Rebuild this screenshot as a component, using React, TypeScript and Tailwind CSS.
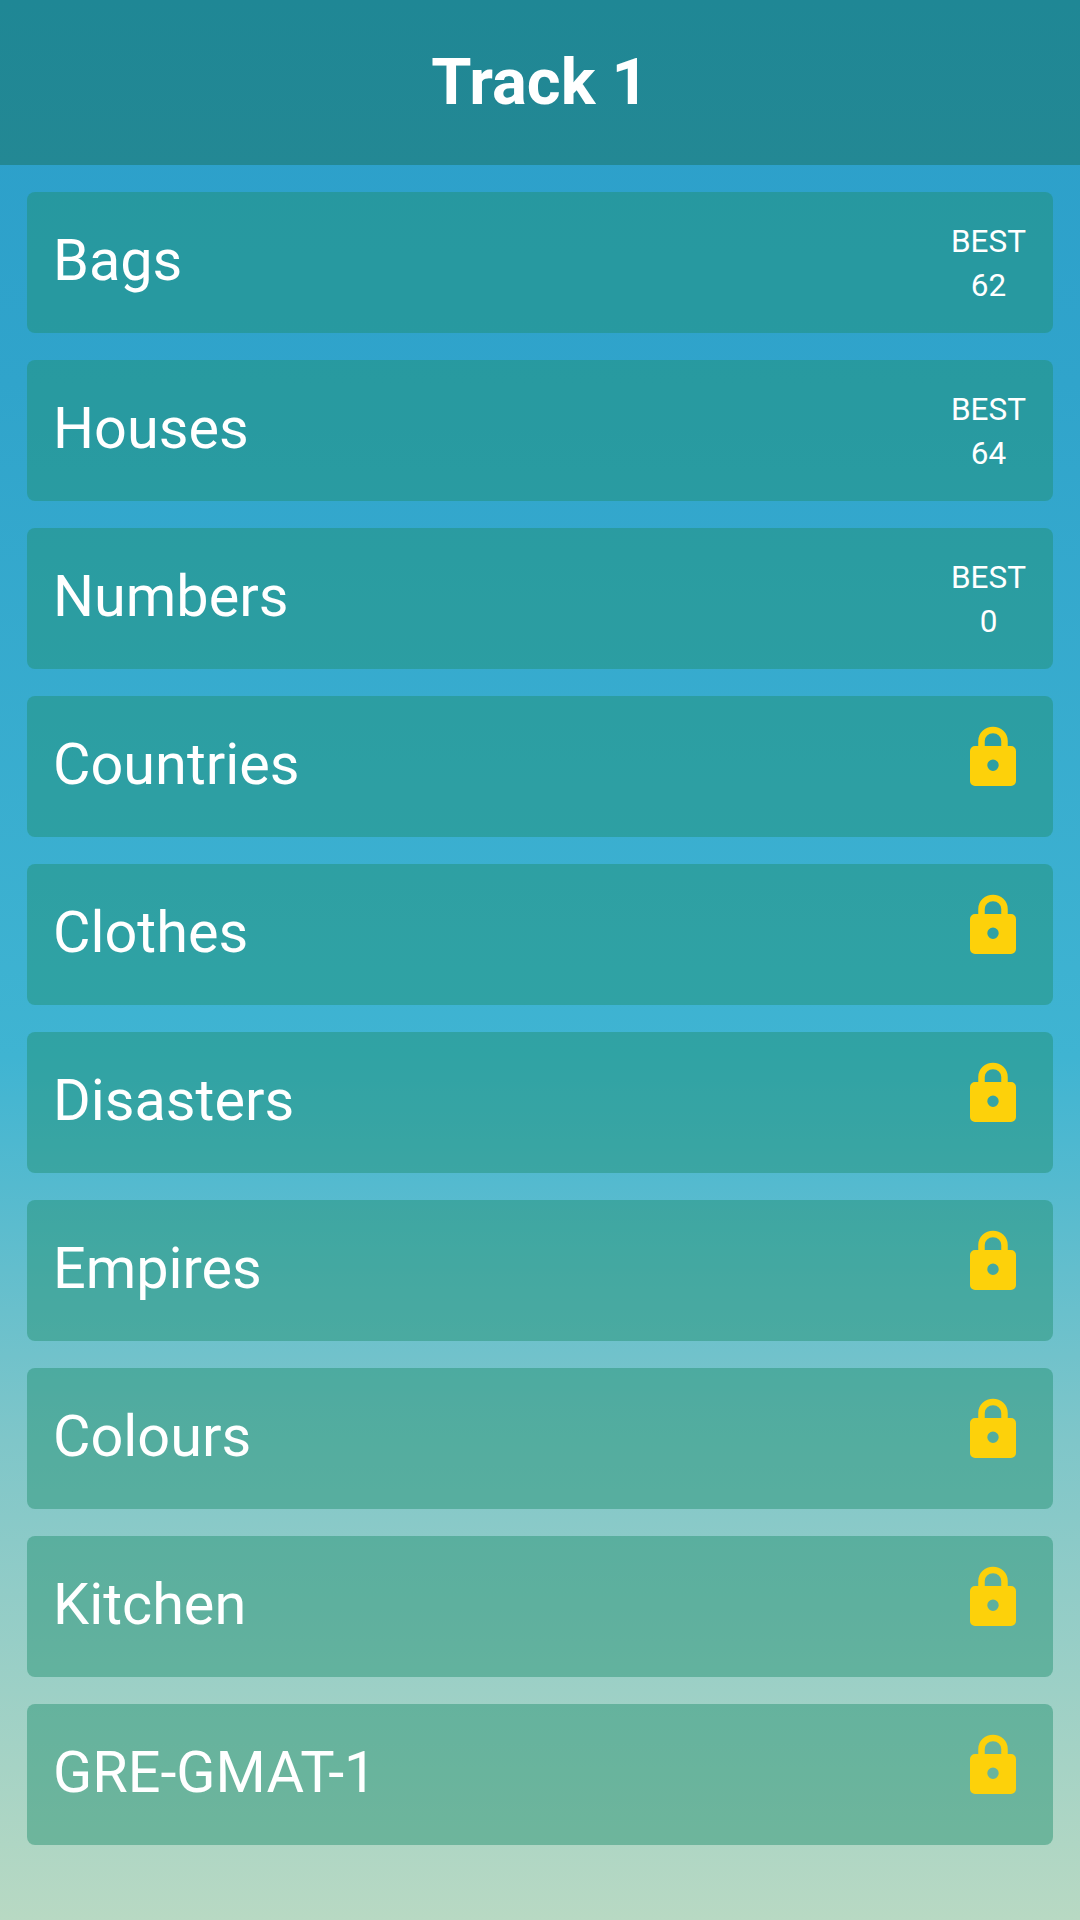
const tracks = [
  { name: 'Bags', best: 62 },
  { name: 'Houses', best: 64 },
  { name: 'Numbers', best: 0 },
  { name: 'Countries' },
  { name: 'Clothes' },
  { name: 'Disasters' },
  { name: 'Empires' },
  { name: 'Colours' },
  { name: 'Kitchen' },
  { name: 'GRE-GMAT-1' },
];

function LockIcon() {
  return (
    <svg width="46" height="60" viewBox="0 0 46 60" className="mr-[10px] mb-[21px] shrink-0" aria-hidden="true">
      <path
        fillRule="evenodd"
        fill="#fdd10a"
        d="M5 20h36a5 5 0 0 1 5 5v30a5 5 0 0 1-5 5H5a5 5 0 0 1-5-5V25a5 5 0 0 1 5-5ZM23 33.5a5.7 5.7 0 1 0 0 11.4a5.7 5.7 0 0 0 0-11.4Z"
      />
      <path d="M11.5 22V15a11.5 11 0 0 1 23 0v7" fill="none" stroke="#fdd10a" strokeWidth="6.5" />
    </svg>
  );
}

export default function App() {
  return (
    <div className="flex h-[1920px] w-[1080px] flex-col bg-[linear-gradient(180deg,#2b9eca_0%,#30a4cb_20%,#3fb4d2_55%,#7fc6c9_75%,#b8d9c3_100%)] font-['Roboto',sans-serif] text-white">
      <header className="flex h-[165px] shrink-0 items-center justify-center bg-[linear-gradient(180deg,#1f8795,#238894)]">
        <h1 className="text-[65px] font-bold leading-none">Track 1</h1>
      </header>
      <main className="flex flex-col gap-[27px] px-[27px] pt-[27px]">
        {tracks.map((track) => (
          <div
            key={track.name}
            className="flex h-[141px] items-center justify-between rounded-lg bg-[#208e6d]/45 pl-[26px] pr-[27px]"
          >
            <span className="mb-[3px] text-[57.6px] leading-none">{track.name}</span>
            {track.best !== undefined ? (
              <div className="mt-[3px] text-center text-[31.5px] leading-[44px]">
                <div>BEST</div>
                <div>{track.best}</div>
              </div>
            ) : (
              <LockIcon />
            )}
          </div>
        ))}
      </main>
    </div>
  );
}
